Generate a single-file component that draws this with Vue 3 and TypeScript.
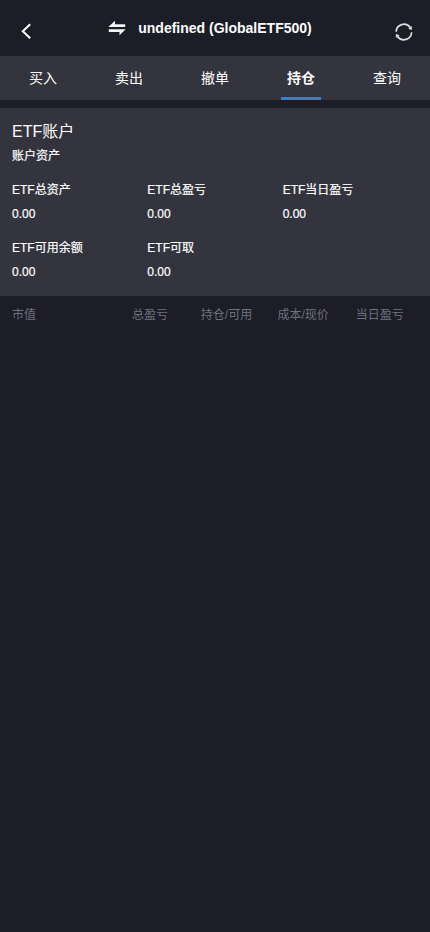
<script setup lang="ts">
import { ref } from 'vue'

interface Stat {
  label: string
  value: string
}

const tabs: string[] = ['买入', '卖出', '撤单', '持仓', '查询']
const active = ref<number>(3)

const stats: Stat[] = [
  { label: 'ETF总资产', value: '0.00' },
  { label: 'ETF总盈亏', value: '0.00' },
  { label: 'ETF当日盈亏', value: '0.00' },
  { label: 'ETF可用余额', value: '0.00' },
  { label: 'ETF可取', value: '0.00' },
]

const columns: string[] = ['市值', '总盈亏', '持仓/可用', '成本/现价', '当日盈亏']
</script>

<template>
  <div class="page">
    <header class="header">
      <button class="back" aria-label="返回">
        <svg width="12" height="18" viewBox="0 0 12 18" fill="none">
          <path d="M10.2 2.3 2.8 9.3l7.4 7" stroke="#fff" stroke-width="2" />
        </svg>
      </button>
      <h1 class="title">
        <svg width="18" height="16" viewBox="0 0 18 16">
          <path d="M0.3 6.9 7 0.8V4.2H17.2V6.9ZM17.7 9.3 11.5 15.2V12H0.8V9.3Z" fill="#f4f4f4" />
        </svg>
        <span>undefined (GlobalETF500)</span>
      </h1>
      <button class="refresh" aria-label="刷新">
        <svg width="18" height="18" viewBox="0 0 18 18" fill="none">
          <path d="M1.2 8.8A7.7 7.7 0 0 1 15.2 4.6M16.6 9.2A7.7 7.7 0 0 1 2.6 13.4" stroke="#dedee2" stroke-width="1.7" />
          <path d="M16.9 3V7L13.2 5.8ZM0.9 15V11L4.6 12.2Z" fill="#dedee2" />
        </svg>
      </button>
    </header>

    <nav class="tabs">
      <button
        v-for="(tab, i) in tabs"
        :key="tab"
        class="tab"
        :class="{ active: i === active }"
        @click="active = i"
      >
        {{ tab }}
      </button>
    </nav>

    <section class="account">
      <h2 class="name">ETF账户</h2>
      <p class="sub">账户资产</p>
      <div class="stats">
        <div v-for="stat in stats" :key="stat.label" class="stat">
          <div>{{ stat.label }}</div>
          <div>{{ stat.value }}</div>
        </div>
      </div>
    </section>

    <div class="columns">
      <span v-for="col in columns" :key="col">{{ col }}</span>
    </div>
  </div>
</template>

<style>
body {
  background: #1c1d27;
}
</style>

<style scoped>
.page {
  min-height: 100vh;
  background: #1c1d27;
  color: #fff;
  font-family: 'Liberation Sans', 'Noto Sans CJK SC', sans-serif;
  font-size: 12px;
}

button {
  margin: 0;
  padding: 0;
  border: 0;
  background: none;
  color: inherit;
  font: inherit;
}

svg {
  display: block;
}

.header {
  display: grid;
  grid-template-columns: 50px 1fr 50px;
  height: 56px;
  background: #1b1e26;
}

.back {
  padding: 22px 0 0 20px;
  display: flex;
  align-items: flex-start;
}

.title {
  display: flex;
  justify-content: center;
  align-items: center;
  gap: 12px;
  height: 56px;
  margin: 0 10px 0 0;
  font-size: 14px;
  font-weight: 700;
  white-space: nowrap;
}

.refresh {
  padding: 23px 0 0 15px;
  display: flex;
  align-items: flex-start;
}

.tabs {
  display: flex;
  height: 44px;
  margin-bottom: 8px;
  background: #33343e;
}

.tab {
  flex: 1;
  display: flex;
  flex-direction: column;
  align-items: center;
  height: 44px;
  font-size: 14px;
  line-height: 44px;
}

.tab.active {
  font-weight: 700;
}

.tab.active::after {
  content: '';
  width: 40px;
  height: 3px;
  margin-top: -3px;
  background: #2c83d8;
}

.account {
  height: 188px;
  padding: 12px 12px 0;
  box-sizing: border-box;
  background: #33343e;
}

.name {
  margin: 0;
  font-size: 16px;
  font-weight: 400;
  line-height: 24px;
}

.sub {
  margin: 0 0 10px;
  line-height: 24px;
}

.sub,
.stats {
  -webkit-text-stroke: 0.2px #fff;
}

.stats {
  display: grid;
  grid-template-columns: repeat(3, 1fr);
  row-gap: 10px;
  line-height: 24px;
}

.columns {
  display: flex;
  padding: 1px 12px 0;
  line-height: 36px;
  color: #70707f;
}

.columns span {
  flex: 1 1 0;
  text-align: center;
  white-space: nowrap;
}

.columns span:first-child {
  flex-grow: 1.3;
  text-align: left;
}
</style>
